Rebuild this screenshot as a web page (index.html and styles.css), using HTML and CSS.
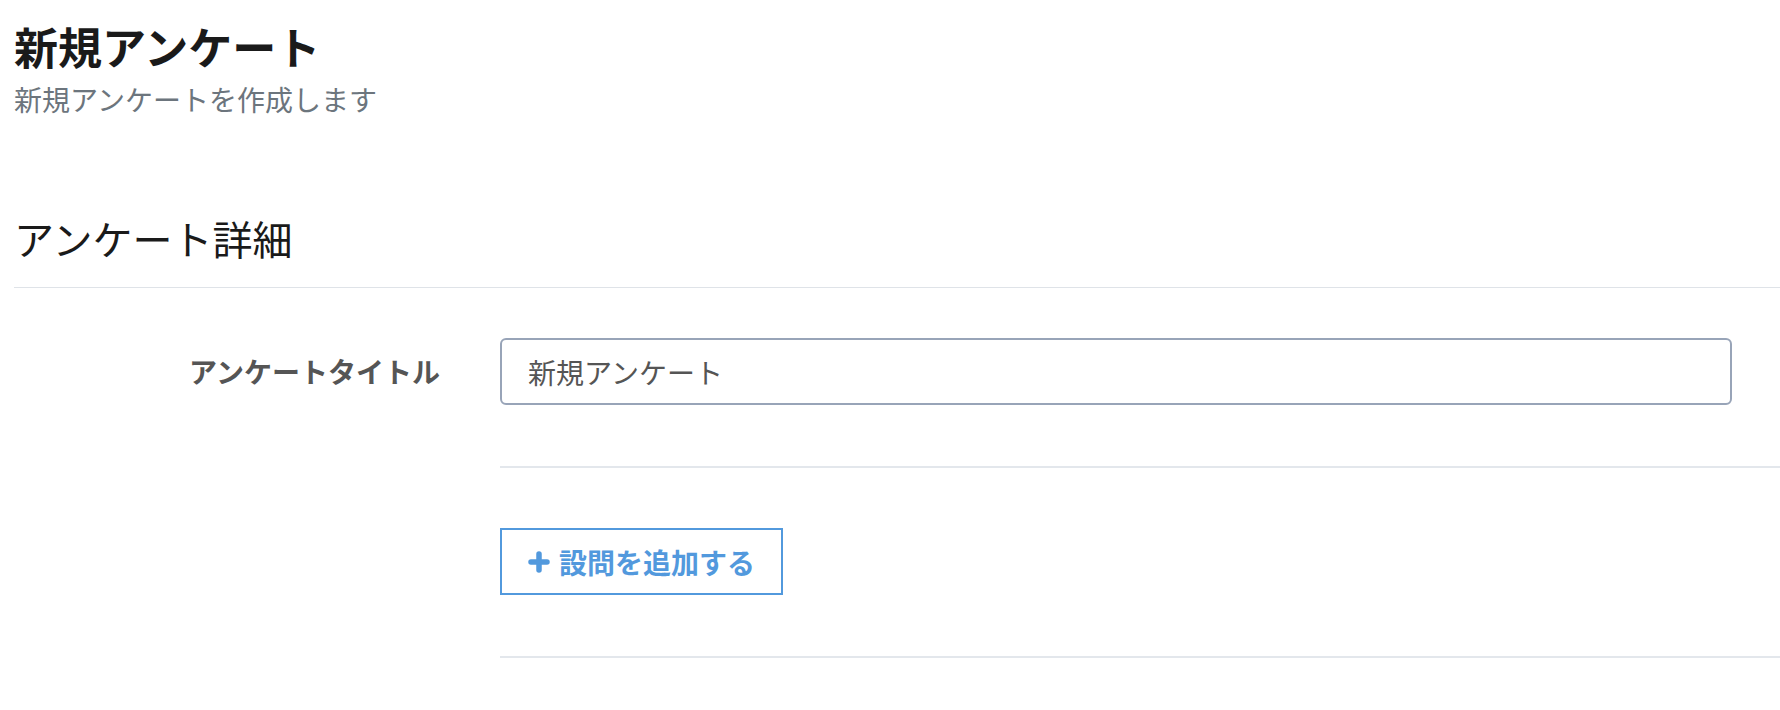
FILE: index.html
```html
<!DOCTYPE html>
<html lang="ja">
<head>
<meta charset="utf-8"/>
<meta content="width=device-width, initial-scale=1.0" name="viewport"/>
<title>新規アンケート</title>
<link rel="stylesheet" href="styles.css">
</head>
<body>
<div class="page-header">
  <h1>新規アンケート</h1>
  <p class="subtitle">新規アンケートを作成します</p>
</div>

<div class="section">
  <h2>アンケート詳細</h2>
  <div class="form-row first">
    <label class="form-label" for="title">アンケートタイトル</label>
    <div class="form-field">
      <input id="title" class="text-input" type="text" value="新規アンケート"/>
    </div>
  </div>
  <div class="form-row">
    <div class="form-label"></div>
    <div class="form-field">
      <button class="add-btn" type="button">
        <svg width="22" height="22" viewBox="0 0 22 22"><path d="M11 3v16M3 11h16" stroke="currentColor" stroke-width="5.5" stroke-linecap="round"/></svg>
        設問を追加する
      </button>
    </div>
  </div>
</div>
</body>
</html>
```

FILE: styles.css
```css
body {
  font-family: "Noto Sans CJK JP", "Noto Sans", sans-serif;
  background: #fff;
  margin: 0;
  padding: 0 0 0 14px;
}
h1 {
  font-size: 44px;
  font-weight: bold;
  color: #1a1a1a;
  margin: 0;
  padding-top: 20px;
  line-height: 1.2;
}
.subtitle {
  font-size: 28px;
  color: #6c757d;
  margin: 8px 0 0;
  line-height: 1.3;
}
.section {
  margin-top: 95px;
}
h2 {
  font-size: 40px;
  font-weight: normal;
  color: #1a1a1a;
  margin: 0;
  padding-bottom: 23px;
  line-height: 1.3;
  border-bottom: 1px solid #dfe3e8;
}
.form-row {
  display: grid;
  grid-template-columns: 486px 1fr;
}
.form-label {
  text-align: right;
  padding: 63px 60px 0 0;
  font-size: 28px;
  line-height: 40px;
  font-weight: bold;
  color: #555;
}
.form-field {
  padding: 60px 48px 61px 0;
  border-bottom: 2px solid #e3e7ec;
}
.form-row.first .form-field {
  padding-top: 50px;
}
.text-input {
  display: block;
  box-sizing: border-box;
  width: 100%;
  height: 67px;
  border: 2px solid #98a4b8;
  border-radius: 6px;
  padding: 0 26px;
  font-family: inherit;
  font-size: 28px;
  color: #555;
  outline: none;
}
.add-btn {
  display: flex;
  align-items: center;
  gap: 9px;
  box-sizing: border-box;
  height: 67px;
  padding: 0 26px;
  background: #fff;
  border: 2px solid #5299dd;
  border-radius: 0;
  font-family: inherit;
  font-size: 28px;
  font-weight: bold;
  color: #5299dd;
}
```
